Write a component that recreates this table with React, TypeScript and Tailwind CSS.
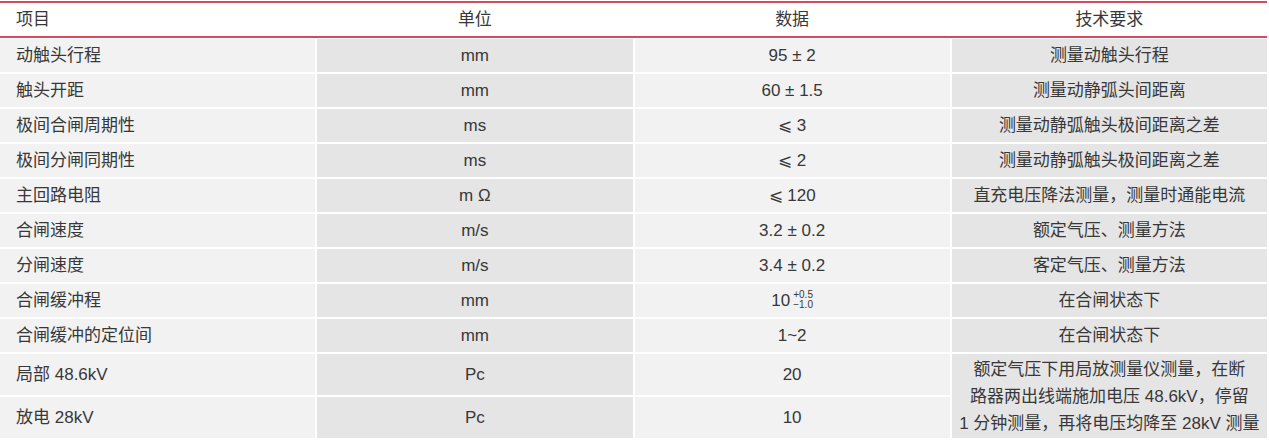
const rows: [string, React.ReactNode, React.ReactNode, string][] = [
  ["动触头行程", "mm", "95 ± 2", "测量动触头行程"],
  ["触头开距", "mm", "60 ± 1.5", "测量动静弧头间距离"],
  ["极间合闸周期性", "ms", "⩽ 3", "测量动静弧触头极间距离之差"],
  ["极间分闸同期性", "ms", "⩽ 2", "测量动静弧触头极间距离之差"],
  ["主回路电阻", "m Ω", "⩽ 120", "直充电压降法测量，测量时通能电流"],
  ["合闸速度", "m/s", "3.2 ± 0.2", "额定气压、测量方法"],
  ["分闸速度", "m/s", "3.4 ± 0.2", "客定气压、测量方法"],
  [
    "合闸缓冲程",
    "mm",
    <span className="inline-flex items-center gap-[3px]">
      10
      <span className="inline-flex flex-col text-[10px] leading-[10px] -mt-[2px]">
        <span>+0.5</span>
        <span>−1.0</span>
      </span>
    </span>,
    "在合闸状态下",
  ],
  ["合闸缓冲的定位间", "mm", "1~2", "在合闸状态下"],
];

const font = { fontFamily: '"Liberation Sans", "Noto Sans CJK SC", sans-serif' };

export default function App() {
  return (
    <div className="w-[1269px] h-[440px] bg-white text-[17px] text-[#383838]" style={font}>
      <div className="w-[1267px]">
        <div className="mt-px h-[37px] border-t-2 border-b-2 border-[#d9485d] grid grid-cols-4 gap-[2px] items-center">
          <div className="pl-4">项目</div>
          <div className="text-center">单位</div>
          <div className="text-center">数据</div>
          <div className="text-center">技术要求</div>
        </div>
        <div className="mt-px grid grid-cols-4 gap-[2px] [grid-template-rows:repeat(9,33px)_41px_41px]">
          {rows.map(([a, b, c, d], i) => (
            <div key={i} className="contents">
              <div className="bg-[#f2f2f2] flex items-center pl-4">{a}</div>
              <div className="bg-[#e5e5e5] flex items-center justify-center">{b}</div>
              <div className="bg-[#f2f2f2] flex items-center justify-center">{c}</div>
              <div className="bg-[#e5e5e5] flex items-center justify-center">{d}</div>
            </div>
          ))}
          <div className="bg-[#f2f2f2] flex items-center pl-4">局部 48.6kV</div>
          <div className="bg-[#e5e5e5] flex items-center justify-center">Pc</div>
          <div className="bg-[#f2f2f2] flex items-center justify-center">20</div>
          <div className="bg-[#e5e5e5] row-span-2 flex items-center justify-center text-center leading-[27px]">
            <div>
              额定气压下用局放测量仪测量，在断
              <br />
              路器两出线端施加电压 48.6kV，停留
              <br />1 分钟测量，再将电压均降至 28kV 测量
            </div>
          </div>
          <div className="bg-[#f2f2f2] flex items-center pl-4">放电 28kV</div>
          <div className="bg-[#e5e5e5] flex items-center justify-center">Pc</div>
          <div className="bg-[#f2f2f2] flex items-center justify-center">10</div>
        </div>
      </div>
    </div>
  );
}
